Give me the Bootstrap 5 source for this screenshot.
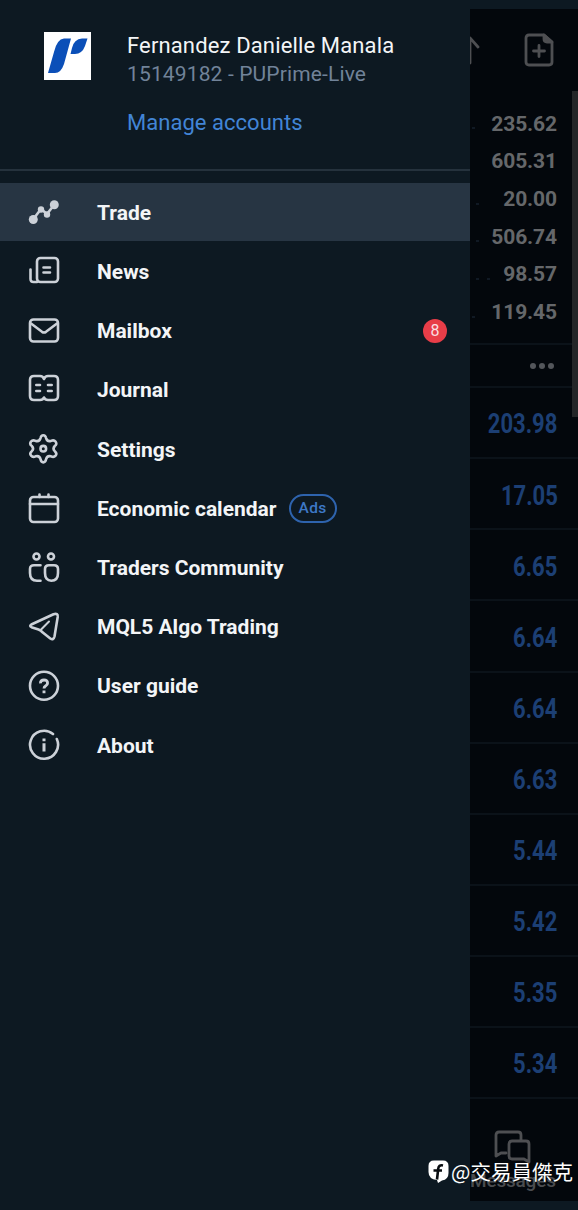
<!DOCTYPE html>
<html lang="en">
<head>
<meta charset="utf-8">
<meta name="viewport" content="width=device-width, initial-scale=1">
<title>Accounts menu</title>
<link href="https://cdn.jsdelivr.net/npm/bootstrap@5.3.0/dist/css/bootstrap.min.css" rel="stylesheet">
<style>
body{background:#0d1922;font-family:Roboto,"Noto Sans CJK TC",sans-serif;color:#f3f5f7;overflow:hidden}
.app{width:578px;height:1210px}
.drawer{width:470px}
.profile{height:171px;padding:32px 0 0 44px;border-bottom:2px solid #25323d}
.avatar{width:47px;height:48px;background:#fff}
.who{margin-left:36px}
.who-name{font-size:22px;line-height:28px;letter-spacing:.14px}
.who-id{font-size:21px;line-height:28px;color:#718399;letter-spacing:.14px}
.manage{font-size:22px;line-height:28px;color:#4285d6;margin-top:21px;letter-spacing:.03px}
.menu{margin-top:12px}
.entry{height:59.2px;padding:0 23px 0 28px;font-weight:700;font-size:21px;color:#f3f5f7;text-decoration:none}
.entry svg{width:32px;height:32px;flex:none;fill:none;stroke:#ccd1d8;stroke-width:2.6;stroke-linecap:round;stroke-linejoin:round}
.entry .label{margin-left:37px;padding-top:2px}
.entry.current{background:linear-gradient(#273543 58.2px,transparent 58.2px)}
.count{width:24px;height:24px;background:#e83d48;font-size:16px;font-weight:400;color:#f9dfe2}
.ads{width:48px;height:29px;margin-left:12px;border:2px solid #2e63ad;color:#3d78c6;font-size:15.5px;font-weight:500;letter-spacing:.3px}
.dimmed{width:108px;height:1192px;margin-top:9px;background:#03070c;overflow:hidden;position:relative}
.tools{height:96px;padding:24px 24px 0 0}
.tools svg,.dock svg{fill:none;stroke:#4e4f52;stroke-width:2.8;stroke-linejoin:round;stroke-linecap:round}
.stat{height:37.7px;padding:1px 21px 0 2px;font-weight:700;font-size:21px;letter-spacing:-.1px;color:#65676a}
.leader{width:3px;height:2px;margin-top:8px;background:#101924}
.more{height:45px;margin-top:12px;border-top:2px solid #0b1219;border-bottom:2px solid #0b1219;padding-right:24px;gap:3px}
.more i{width:6px;height:6px;background:#53565b}
.deal{height:71.1px;border-bottom:2px solid #0b1219;padding:4px 20.5px 0 0;color:#1c3f74;font-size:27px;font-weight:700}
.deal span{transform:scaleX(.815);transform-origin:right center}
.scroller{right:0;top:82px;width:6px;height:326px;background:#242628}
.dock{padding:31px 0 0 0}
.dock svg{margin-left:24px}
.dock-label{font-size:19px;line-height:22px;padding-top:2px;color:#4a4c4f;font-weight:500;letter-spacing:-.2px}
.credit{right:5px;bottom:23px;font-family:"Noto Sans CJK TC",sans-serif;font-size:20.5px;line-height:32px;color:#fff;white-space:nowrap;gap:2px}
</style>
</head>
<body>
<div class="app d-flex position-relative">
<aside class="drawer flex-shrink-0">
<header class="profile d-flex">
<div class="avatar"><svg class="d-block" width="47" height="48" viewBox="0 0 47 48" fill="#0b4fb8"><path d="M4 41 10 20Q13 7 20 6.5H27L20 32Q17 41 11 41Z"/><path d="M26.5 22 28 16Q30 7 38 6.5H43.5L41 14Q38 22 31 22Z"/></svg></div>
<div class="who">
<div class="who-name"><span>Fernandez Danielle Manala</span></div>
<div class="who-id"><span>15149182 - PUPrime-Live</span></div>
<div class="manage"><span>Manage accounts</span></div>
</div>
</header>
<nav class="menu">
<a class="entry current d-flex align-items-center"><svg viewBox="0 0 32 32"><path d="M5 22.5 13 12 19 17 26 8"/><g fill="#ccd1d8" stroke="none"><circle cx="5.3" cy="22.5" r="4.5"/><circle cx="13" cy="12.5" r="3.2"/><circle cx="19" cy="17.5" r="3.2"/><circle cx="26.3" cy="7.8" r="4.5"/></g></svg><span class="label">Trade</span></a>
<a class="entry d-flex align-items-center"><svg viewBox="0 0 32 32"><rect x="9" y="2" width="21" height="24" rx="3.5"/><path d="M9 26H5.5Q2.5 26 2.5 23V13.5M15.5 11.5H22M15.5 16.5H22"/></svg><span class="label">News</span></a>
<a class="entry d-flex align-items-center"><svg viewBox="0 0 32 32"><rect x="2" y="4.5" width="28" height="22" rx="3.5"/><path d="M3 8.5 14 16.8Q16 18.1 18 16.8L29 8.5"/></svg><span class="label">Mailbox</span><span class="count rounded-circle ms-auto d-flex align-items-center justify-content-center">8</span></a>
<a class="entry d-flex align-items-center"><svg viewBox="0 0 32 32"><path d="M16 5Q15 2 12 2H6Q2 2 2 6V22Q2 26 6 26H12Q15 26 16 23.5Q17 26 20 26H26Q30 26 30 22V6Q30 2 26 2H20Q17 2 16 5ZM8.3 11H12M8.3 17H12M20 11H23.7M20 17H23.7"/></svg><span class="label">Journal</span></a>
<a class="entry d-flex align-items-center"><svg viewBox="0 0 32 32"><g transform="translate(-.2 .7)"><path d="M12.7 4.4Q13.3 1.5 15.5 1.5T18.3 4.4Q19.3 8.2 23.2 7.2Q26.2 6 27.7 7.8Q29.6 10.5 27 12.3Q24.5 15 27 17.5Q29.6 19.8 27.8 22Q26 24 23.2 22.6Q19.3 21.6 18.3 25.4Q17.7 28.7 15.5 28.7T12.7 25.4Q11.7 21.6 7.8 22.6Q5 24 3.3 22Q1.4 19.8 4 17.5Q6.5 15 4 12.3Q1.4 10.5 3.2 7.8Q4.8 6 7.8 7.2Q11.7 8.2 12.7 4.4Z"/><circle cx="15.5" cy="15" r="2.8"/></g></svg><span class="label">Settings</span></a>
<a class="entry d-flex align-items-center"><svg viewBox="0 0 32 32"><rect x="2" y="4" width="28" height="25" rx="3.5"/><path d="M2 11H30M11.5 1.5V4M20.5 1.5V4"/></svg><span class="label">Economic calendar</span><span class="ads rounded-pill d-flex align-items-center justify-content-center"><span>Ads</span></span></a>
<a class="entry d-flex align-items-center"><svg viewBox="0 0 32 32"><circle cx="8.5" cy="4.5" r="3"/><circle cx="23" cy="4.5" r="3"/><path d="M12.5 13.2H6Q2 13.2 2 17V21Q2 28.7 9 28.7H12.5M21 13.2H26Q30 13.2 30 17V21Q30 28.7 23.3 28.7Q17 28.7 17 21V17Q17 13.2 21 13.2Z"/></svg><span class="label">Traders Community</span></a>
<a class="entry d-flex align-items-center"><svg viewBox="0 0 32 32"><path d="M3.3 13.5 25.5 3.2Q30.2 1.8 29.7 6L26.5 25.5Q25.5 29.5 22.3 27.5L14.5 21.3Q13 19.5 10.5 18.5L3.5 16.2Q1 15 3.3 13.5Z"/><path stroke-width="2" d="M12.6 19 21 10.5"/></svg><span class="label">MQL5 Algo Trading</span></a>
<a class="entry d-flex align-items-center"><svg viewBox="0 0 32 32"><circle cx="16" cy="15.8" r="14"/><path stroke-width="2.9" stroke-linecap="butt" d="M12.5 13.4Q12.3 10 16 10T19.5 13.2Q19.5 14.8 17.8 15.8Q16 16.9 16 18.6M16 20.5V23.3"/></svg><span class="label">User guide</span></a>
<a class="entry d-flex align-items-center"><svg viewBox="0 0 32 32"><path d="M25 5A14 14 0 1 0 28.8 10"/><path stroke-width="3" stroke-linecap="butt" d="M16 9.5V12.2M16 14.2V22.5"/></svg><span class="label">About</span></a>
</nav>
</aside>
<main class="dimmed flex-shrink-0">
<div class="tools d-flex justify-content-between">
<svg width="12" height="34" viewBox="0 0 12 34"><path d="M0 5 8 14M0 5V30"/></svg>
<svg width="30" height="34" viewBox="0 0 30 34"><path d="M5 2H20L28 9V29Q28 32 25 32H5Q2 32 2 29V5Q2 2 5 2ZM15 12.5V23.5M9.5 18H20.5"/><path d="M20 2V6Q20 9 23 9H28Z" fill="#4e4f52"/></svg>
</div>
<div class="stat d-flex align-items-center"><i class="leader"></i><span class="ms-auto">235.62</span></div>
<div class="stat d-flex align-items-center"><span class="ms-auto">605.31</span></div>
<div class="stat d-flex align-items-center"><i class="leader ms-1"></i><span class="ms-auto">20.00</span></div>
<div class="stat d-flex align-items-center"><i class="leader ms-1"></i><span class="ms-auto">506.74</span></div>
<div class="stat d-flex align-items-center"><i class="leader ms-1"></i><i class="leader ms-2"></i><span class="ms-auto">98.57</span></div>
<div class="stat d-flex align-items-center"><i class="leader"></i><span class="ms-auto">119.45</span></div>
<div class="more d-flex align-items-center justify-content-end"><i class="rounded-circle"></i><i class="rounded-circle"></i><i class="rounded-circle"></i></div>
<div class="deal d-flex align-items-center justify-content-end"><span>203.98</span></div>
<div class="deal d-flex align-items-center justify-content-end"><span>17.05</span></div>
<div class="deal d-flex align-items-center justify-content-end"><span>6.65</span></div>
<div class="deal d-flex align-items-center justify-content-end"><span>6.64</span></div>
<div class="deal d-flex align-items-center justify-content-end"><span>6.64</span></div>
<div class="deal d-flex align-items-center justify-content-end"><span>6.63</span></div>
<div class="deal d-flex align-items-center justify-content-end"><span>5.44</span></div>
<div class="deal d-flex align-items-center justify-content-end"><span>5.42</span></div>
<div class="deal d-flex align-items-center justify-content-end"><span>5.35</span></div>
<div class="deal d-flex align-items-center justify-content-end"><span>5.34</span></div>
<div class="dock"><svg class="d-block" width="38" height="38" viewBox="0 0 38 38"><path d="M12 23H7L2 26V5Q2 2 5 2H24Q27 2 27 5V10M18 11H32Q35 11 35 14V32L30 29H18Q15 29 15 26V14Q15 11 18 11Z"/></svg>
<div class="dock-label">Messages</div></div>
<div class="scroller position-absolute"></div>
</main>
<div class="credit position-absolute d-flex align-items-center"><svg width="21" height="24" viewBox="0 0 21 24"><path fill="#fff" d="M6 1.5H15Q20.5 1.5 20.5 7V14Q20.5 20.5 14 21.5L10 24 9 21Q.5 20 .5 13V7Q.5 1.5 6 1.5Z"/><path fill="none" stroke="#080c10" stroke-width="2.6" d="M15 6.5Q10.5 5.5 10.2 10L9 20.5M5.5 11.5H14"/></svg><span>@交易員傑克</span></div>
</div>
<script src="https://cdn.jsdelivr.net/npm/bootstrap@5.3.0/dist/js/bootstrap.bundle.min.js"></script>
</body>
</html>
